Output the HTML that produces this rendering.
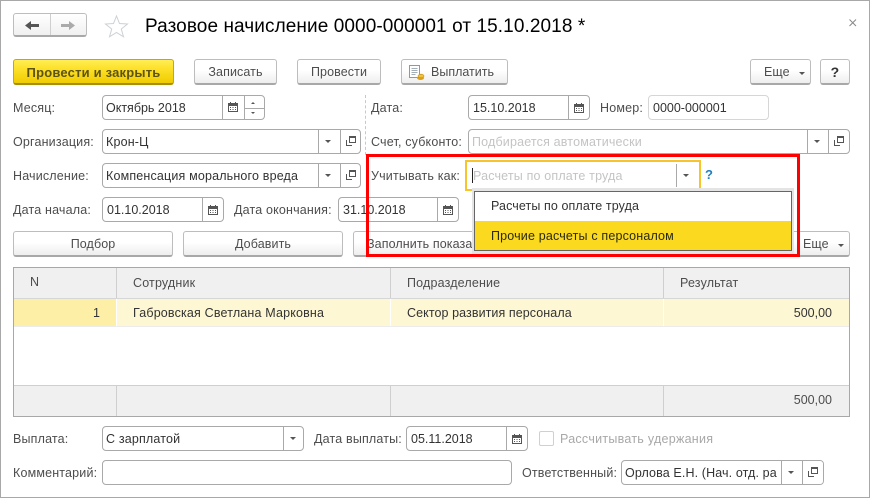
<!DOCTYPE html>
<html lang="ru"><head><meta charset="utf-8"><title>Разовое начисление</title>
<style>
html,body{margin:0;padding:0}
body{width:870px;height:498px;overflow:hidden;background:#fff;position:relative;font:12.5px/14px "Liberation Sans",Arial,sans-serif;color:#4a4a4a}
#frame{position:absolute;left:0;top:0;width:868px;height:496px;border:1px solid #a8a8a8}
.a{position:absolute;white-space:nowrap}
.l{position:absolute;white-space:nowrap;letter-spacing:.17px;color:#4d4d4d;margin-top:1px}
.btn{position:absolute;box-sizing:border-box;height:26px;border:1px solid #bdbdbd;border-bottom:2px solid #a8a8a8;border-radius:3px;background:linear-gradient(#fff 0,#fff 45%,#eee 100%);text-align:center;line-height:25px;color:#4d4d4d;letter-spacing:.1px}
.f{position:absolute;box-sizing:border-box;height:25px;border:1px solid #a9a9a9;border-radius:4px;background:#fff;overflow:hidden;line-height:24px;color:#333;letter-spacing:.17px;padding-left:3px;white-space:nowrap}
.n{letter-spacing:0;padding-left:4px}
.d{position:absolute;top:0;bottom:0;width:1px;background:#a9a9a9}
.tri{position:absolute;width:0;height:0;border-left:3px solid transparent;border-right:3px solid transparent;border-top:3px solid #555}
svg{position:absolute;overflow:visible}
.th{position:absolute;background:#f0f0f0}
.cell{position:absolute;white-space:nowrap;letter-spacing:.17px;color:#4d4d4d}
.num{letter-spacing:0}
</style></head><body>
<div id="frame"></div>

<!-- nav -->
<div class="btn" style="left:13px;top:13px;width:74px;height:24px;background:linear-gradient(#fff,#f0f0f0)"></div>
<div class="a" style="left:50px;top:14px;width:1px;height:21px;background:#cfcfcf"></div>
<svg style="left:0;top:0" width="140" height="45"><path d="M25 25.500l6-4.500v3h8v3h-8v3z" fill="#555"/><path d="M75 25.500l-6-4.500v3h-8v3h8v3z" fill="#aaa"/>
<path d="M116.500 16l3 7.500 8 .5-6.200 5 2.200 7.800-7-4.300-7 4.300 2.200-7.800-6.200-5 8-.5z" fill="#fff" stroke="#ccd1d5" stroke-width="1"/></svg>
<div class="a" style="left:145px;top:16px;font-size:19px;line-height:22px;color:#000;letter-spacing:.09px">Разовое начисление 0000-000001 от 15.10.2018 *</div>
<svg style="left:849px;top:19px" width="8" height="8"><path d="M.5 .5l6.500 6.500M7 .5L.5 7" stroke="#888" fill="none"/></svg>

<!-- toolbar -->
<div class="btn" style="left:13px;top:59px;width:161px;border-color:#c9a800;border-bottom-color:#a88f00;background:linear-gradient(#ffee55 0,#fde22c 35%,#f0cc00 100%);font-weight:bold;font-size:13px;color:#5d5316;letter-spacing:.2px">Провести и закрыть</div>
<div class="btn" style="left:194px;top:59px;width:83px">Записать</div>
<div class="btn" style="left:297px;top:59px;width:84px">Провести</div>
<div class="btn" style="left:401px;top:59px;width:107px;text-align:left;padding-left:29px;letter-spacing:0">Выплатить</div>
<svg style="left:409px;top:65px" width="16" height="16"><path d="M.5 .5h10v12H.5z" fill="#fff" stroke="#7f9cb8"/><path d="M2.500 3.500h6M2.500 5.500h6M2.500 7.500h6M2.500 9.500h4" stroke="#a3aeb8"/><ellipse cx="11.500" cy="13" rx="3.500" ry="2" fill="#dca21e"/><ellipse cx="12" cy="11" rx="3" ry="1.800" fill="#f0c23c" stroke="#c08a10" stroke-width=".6"/></svg>
<div class="btn" style="left:750px;top:59px;width:61px;text-align:left;padding-left:13px">Еще</div>
<div class="tri" style="left:799px;top:72px"></div>
<div class="btn" style="left:820px;top:59px;width:30px;font-weight:bold;font-size:14px;color:#333">?</div>

<!-- dashed separator -->
<div class="a" style="left:365px;top:95px;width:0;height:60px;border-left:1px dashed #c8c8c8"></div>

<!-- row 1 -->
<div class="l" style="left:13px;top:100px">Месяц:</div>
<div class="f n" style="left:102px;top:95px;width:163px;padding-left:3px">Октябрь 2018<span class="d" style="left:119px"></span><span class="d" style="left:141px"></span>
<span class="a" style="left:141px;top:12px;width:21px;height:1px;background:#a9a9a9"></span></div>
<div class="tri" style="left:251px;top:102px;border-left-width:2px;border-right-width:2px;border-top:0;border-bottom:2px solid #555"></div>
<div class="tri" style="left:251px;top:112px;border-left-width:2px;border-right-width:2px;border-top-width:2px"></div>
<svg style="left:228px;top:102px" width="10" height="10"><use href="#calicon"/></svg>

<div class="l" style="left:371px;top:100px">Дата:</div>
<div class="f n" style="left:468px;top:95px;width:122px">15.10.2018<span class="d" style="left:99px"></span></div>
<svg style="left:574px;top:103px" width="10" height="10"><use href="#calicon"/></svg>
<div class="l" style="left:600px;top:100px">Номер:</div>
<div class="f n" style="left:648px;top:95px;width:121px;border-color:#d6d6d6">0000-000001</div>

<!-- row 2 -->
<div class="l" style="left:13px;top:134px">Организация:</div>
<div class="f" style="left:102px;top:129px;width:259px">Крон-Ц<span class="d" style="left:215px"></span><span class="d" style="left:237px"></span></div>
<div class="tri" style="left:325px;top:140px"></div>
<svg style="left:346px;top:136px" width="12" height="12"><use href="#open"/></svg>
<div class="l" style="left:371px;top:134px">Счет, субконто:</div>
<div class="f" style="left:468px;top:129px;width:382px;color:#c4c4c4">Подбирается автоматически<span class="d" style="left:338px"></span><span class="d" style="left:359px"></span></div>
<div class="tri" style="left:814px;top:140px"></div>
<svg style="left:834px;top:136px" width="12" height="12"><use href="#open"/></svg>

<!-- row 3 -->
<div class="l" style="left:13px;top:168px">Начисление:</div>
<div class="f" style="left:102px;top:163px;width:259px">Компенсация морального вреда<span class="d" style="left:215px"></span><span class="d" style="left:237px"></span></div>
<div class="tri" style="left:325px;top:174px"></div>
<svg style="left:346px;top:170px" width="12" height="12"><use href="#open"/></svg>
<div class="l" style="left:371px;top:168px">Учитывать как:</div>
<div class="f" style="left:465px;top:160px;width:236px;height:31px;border:2px solid #f7c52b;border-radius:0;color:#c4c4c4;padding-left:6px;line-height:29px">Расчеты по оплате труда<span class="d" style="left:209px;top:2px;bottom:2px"></span></div>
<div class="a" style="left:472px;top:168px;width:1px;height:15px;background:#222"></div>
<div class="tri" style="left:683px;top:174px"></div>
<div class="a" style="left:705px;top:168px;font-weight:bold;font-size:13px;color:#1f7fc0">?</div>

<!-- row 4 -->
<div class="l" style="left:13px;top:202px">Дата начала:</div>
<div class="f n" style="left:102px;top:197px;width:122px">01.10.2018<span class="d" style="left:99px"></span></div>
<svg style="left:208px;top:205px" width="10" height="10"><use href="#calicon"/></svg>
<div class="l" style="left:234px;top:202px">Дата окончания:</div>
<div class="f n" style="left:338px;top:197px;width:121px">31.10.2018<span class="d" style="left:98px"></span></div>
<svg style="left:443px;top:205px" width="10" height="10"><use href="#calicon"/></svg>

<!-- buttons row -->
<div class="btn" style="left:13px;top:231px;width:160px">Подбор</div>
<div class="btn" style="left:183px;top:231px;width:160px">Добавить</div>
<div class="btn" style="left:353px;top:231px;width:180px;text-align:left;padding-left:13px">Заполнить показатели</div>
<div class="btn" style="left:780px;top:231px;width:70px;text-align:left;padding-left:22px">Еще</div>
<div class="tri" style="left:838px;top:244px"></div>

<!-- table -->
<div class="a" style="left:13px;top:267px;width:835px;height:148px;border:1px solid #a8a8a8;background:#fff"></div>
<div class="th" style="left:14px;top:268px;width:835px;height:30px"></div>
<div class="a" style="left:14px;top:298px;width:835px;height:1px;background:#d6d6d6"></div>
<div class="a" style="left:14px;top:299px;width:102px;height:27px;background:#fdf0a6"></div>
<div class="a" style="left:117px;top:299px;width:732px;height:27px;background:#fdf7d3"></div>
<div class="a" style="left:14px;top:326px;width:835px;height:1px;background:#ececec"></div>
<div class="th" style="left:14px;top:386px;width:835px;height:30px"></div>
<div class="a" style="left:14px;top:385px;width:835px;height:1px;background:#cfcfcf"></div>
<div class="a" style="left:116px;top:268px;width:1px;height:30px;background:#cfcfcf"></div>
<div class="a" style="left:390px;top:268px;width:1px;height:30px;background:#cfcfcf"></div>
<div class="a" style="left:663px;top:268px;width:1px;height:30px;background:#cfcfcf"></div>
<div class="a" style="left:116px;top:299px;width:1px;height:27px;background:#fff"></div>
<div class="a" style="left:390px;top:299px;width:1px;height:27px;background:#fff"></div>
<div class="a" style="left:663px;top:299px;width:1px;height:27px;background:#fff"></div>
<div class="a" style="left:116px;top:386px;width:1px;height:30px;background:#cfcfcf"></div>
<div class="a" style="left:390px;top:386px;width:1px;height:30px;background:#cfcfcf"></div>
<div class="a" style="left:663px;top:386px;width:1px;height:30px;background:#cfcfcf"></div>
<div class="cell" style="left:30px;top:275px">N</div>
<div class="cell" style="left:133px;top:276px">Сотрудник</div>
<div class="cell" style="left:407px;top:276px">Подразделение</div>
<div class="cell" style="left:680px;top:276px">Результат</div>
<div class="cell" style="left:93px;top:306px;color:#333">1</div>
<div class="cell" style="left:133px;top:306px;color:#333">Габровская Светлана Марковна</div>
<div class="cell" style="left:407px;top:306px;color:#333;letter-spacing:.08px">Сектор развития персонала</div>
<div class="cell num" style="right:38px;top:306px;color:#333">500,00</div>
<div class="cell num" style="right:38px;top:393px">500,00</div>

<!-- bottom -->
<div class="l" style="left:13px;top:431px">Выплата:</div>
<div class="f" style="left:102px;top:426px;width:202px">С зарплатой<span class="d" style="left:180px"></span></div>
<div class="tri" style="left:290px;top:437px"></div>
<div class="l" style="left:314px;top:431px">Дата выплаты:</div>
<div class="f n" style="left:406px;top:426px;width:122px">05.11.2018<span class="d" style="left:99px"></span></div>
<svg style="left:512px;top:434px" width="10" height="10"><use href="#calicon"/></svg>
<div class="a" style="left:539px;top:431px;width:13px;height:13px;border:1px solid #d0d0d0;border-radius:2px"></div>
<div class="l" style="left:560px;top:431px;color:#a8a8a8;letter-spacing:.27px">Рассчитывать удержания</div>

<div class="l" style="left:13px;top:465px">Комментарий:</div>
<div class="f" style="left:102px;top:460px;width:410px"></div>
<div class="l" style="left:522px;top:465px">Ответственный:</div>
<div class="f" style="left:621px;top:460px;width:203px;letter-spacing:.12px">Орлова Е.Н. (Нач. отд. ра<span class="a" style="left:159px;top:0;bottom:0;width:44px;background:#fff"></span><span class="d" style="left:159px"></span><span class="d" style="left:180px"></span></div>
<div class="tri" style="left:788px;top:471px"></div>
<svg style="left:808px;top:467px" width="12" height="12"><use href="#open"/></svg>

<!-- popup -->
<div class="a" style="left:472px;top:188px;width:322px;height:66px;background:#e4e4e4"></div>
<div class="a" style="left:474px;top:191px;width:316px;height:58px;border:1px solid #666;background:#fff"></div>
<div class="a" style="left:475px;top:221px;width:316px;height:29px;background:#fbd91f"></div>
<div class="a" style="left:491px;top:199px;letter-spacing:.1px;color:#333">Расчеты по оплате труда</div>
<div class="a" style="left:491px;top:229px;letter-spacing:.17px;color:#2a2a10">Прочие расчеты с персоналом</div>

<!-- red frame -->
<div class="a" style="left:366px;top:154px;width:428px;height:97px;border:3px solid #f00"></div>

<svg width="0" height="0" style="left:0;top:0"><defs>
<g id="calicon"><path d="M.5 1.500h9v8h-9z" fill="#fff" stroke="#555"/><path d="M0 1h10v3H0z" fill="#555"/><path d="M2.500 0v2M7.500 0v2" stroke="#555"/><path d="M2 5.500h1M4.500 5.500h1M7 5.500h1M2 7.500h1M4.500 7.500h1M7 7.500h1" stroke="#555"/></g>
<g id="open"><path d="M3.500 .5h6v6h-6z" fill="none" stroke="#555"/><path d="M3 1h7v1H3z" fill="#555"/><path d="M.5 4v5.500H6" fill="none" stroke="#555"/></g>
</defs></svg>
</body></html>
